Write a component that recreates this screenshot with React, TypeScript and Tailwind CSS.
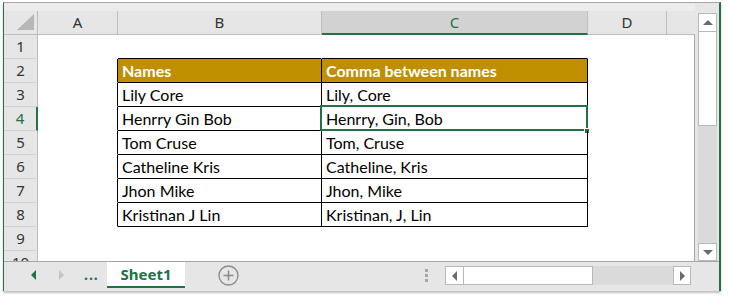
import React from 'react';

const GREEN = '#217346';

type Row = { n: number; b?: string; c?: string; head?: boolean };

const rows: Row[] = [
  { n: 1 },
  { n: 2, b: 'Names', c: 'Comma between names', head: true },
  { n: 3, b: 'Lily Core', c: 'Lily, Core' },
  { n: 4, b: 'Henrry Gin Bob', c: 'Henrry, Gin, Bob' },
  { n: 5, b: 'Tom Cruse', c: 'Tom, Cruse' },
  { n: 6, b: 'Catheline Kris', c: 'Catheline, Kris' },
  { n: 7, b: 'Jhon Mike', c: 'Jhon, Mike' },
  { n: 8, b: 'Kristinan J Lin', c: 'Kristinan, J, Lin' },
  { n: 9 },
  { n: 10 },
];

const uiFont = { fontFamily: '"Noto Sans", "Open Sans", sans-serif' };
const cellFont = { fontFamily: 'Lato, "Open Sans", sans-serif' };

const ColHeader: React.FC<{ label: string; width: string; selected?: boolean }> = ({ label, width, selected }) => (
  <div
    className={`${width} h-[24px] shrink-0 flex items-center justify-center text-[15px] ${
      selected
        ? 'bg-[#d2d2d2] text-[#217346] border-b-2 border-b-[#217346] border-r border-r-[#bdbdbd]'
        : 'text-[#333] border-b border-b-[#bdbdbd] border-r border-r-[#bdbdbd]'
    }`}
  >
    {label}
  </div>
);

const SheetRow: React.FC<{ row: Row }> = ({ row }) => {
  const inTable = row.n >= 2 && row.n <= 8;
  const hasBottom = row.n >= 1 && row.n <= 8;
  const selected = row.n === 4;
  const vLine = inTable ? 'border-r-black' : 'border-r-transparent';
  const hLine = hasBottom ? 'border-b-black' : 'border-b-transparent';
  const fill = row.head ? 'bg-[#bf8f00] text-white font-bold' : 'text-black';

  return (
    <div className="flex h-[24px] shrink-0">
      <div
        style={uiFont}
        className={`w-[34px] h-[24px] shrink-0 flex items-center justify-center text-[15px] bg-[#e6e6e6] border-b border-b-[#d0d0d0] ${
          selected ? 'bg-[#d2d2d2] text-[#217346] border-r-2 border-r-[#217346]' : 'text-[#333] border-r border-r-[#bdbdbd]'
        }`}
      >
        {row.n}
      </div>
      <div className={`w-[80px] h-[24px] shrink-0 border-r border-b border-b-transparent ${vLine}`} />
      <div
        style={cellFont}
        className={`w-[204px] h-[24px] shrink-0 flex items-center pl-[4px] pt-[1px] text-[16px] border-r border-b ${vLine} ${hLine} ${row.b ? fill : ''}`}
      >
        {row.b}
      </div>
      <div
        style={cellFont}
        className={`relative w-[266px] h-[24px] shrink-0 flex items-center pl-[4px] pt-[1px] text-[16px] border-r border-b ${vLine} ${hLine} ${row.c ? fill : ''}`}
      >
        {row.c}
        {selected && (
          <>
            <div className="absolute left-[-2px] top-[-2px] w-[268px] h-[26px] border-2 border-[#217346]" />
            <div className="absolute left-[262px] top-[21px] w-[6px] h-[6px] bg-[#217346] border border-white" />
          </>
        )}
      </div>
    </div>
  );
};

const Tri: React.FC<{ dir: 'up' | 'down' | 'left' | 'right'; color: string }> = ({ dir, color }) => {
  const pts = {
    up: '0,5 5,0 10,5',
    down: '0,0 10,0 5,5',
    left: '5,0 5,10 0,5',
    right: '0,0 0,10 5,5',
  }[dir];
  const w = dir === 'up' || dir === 'down' ? 10 : 5;
  const h = dir === 'up' || dir === 'down' ? 5 : 10;
  return (
    <svg width={w} height={h} viewBox={`0 0 ${w} ${h}`}>
      <polygon points={pts} fill={color} />
    </svg>
  );
};

export default function App() {
  return (
    <div className="w-[730px] h-[300px] bg-white pt-[2px] pl-[3px] overflow-hidden">
      <div className="w-[718px] h-[289px] flex flex-col bg-[#e6e6e6] border-t border-t-[#a6a6a6] border-l border-l-[#217346] border-r-2 border-r-[#217346] shadow-[0_2px_2px_rgba(0,0,0,0.25)]">
        {/* sheet area */}
        <div className="flex h-[258px] shrink-0">
          <div className="w-[691px] shrink-0 flex flex-col">
            <div className="h-[8px] shrink-0 bg-[#ececec]" />
            <div className="flex shrink-0" style={uiFont}>
              <div className="w-[34px] h-[24px] shrink-0 flex items-end justify-end pr-[3px] pb-[4px] border-r border-r-[#bdbdbd] border-b border-b-[#bdbdbd]">
                <svg width="17" height="16" viewBox="0 0 17 16">
                  <polygon points="17,0 17,16 0,16" fill="#b7b7b7" />
                </svg>
              </div>
              <ColHeader label="A" width="w-[80px]" />
              <ColHeader label="B" width="w-[204px]" />
              <ColHeader label="C" width="w-[266px]" selected />
              <ColHeader label="D" width="w-[79px]" />
              <div className="flex-1 h-[24px] border-b border-b-[#bdbdbd]" />
            </div>
            <div className="flex-1 flex flex-col overflow-hidden bg-white border-r border-r-[#a6a6a6]">
              {rows.map(r => (
                <SheetRow key={r.n} row={r} />
              ))}
            </div>
          </div>
          {/* vertical scrollbar */}
          <div className="flex-1 pl-[3px] pt-[10px] flex">
            <div className="w-[19px] flex flex-col bg-[#dadada]">
              <div className="h-[19px] bg-white border border-[#b9b9b9] flex items-center justify-center">
                <Tri dir="up" color="#6b6b6b" />
              </div>
              <div className="h-[94px] bg-white border border-[#b9b9b9] border-t-0" />
              <div className="flex-1" />
              <div className="h-[18px] bg-white border border-[#b9b9b9] flex items-center justify-center">
                <Tri dir="down" color="#6b6b6b" />
              </div>
            </div>
          </div>
        </div>

        {/* sheet tabs */}
        <div className="flex-1 flex items-start border-t border-t-[#a6a6a6]" style={uiFont}>
          <div className="w-[103px] h-[26px] flex items-center shrink-0">
            <div className="w-[27px]" />
            <Tri dir="left" color={GREEN} />
            <div className="w-[23px]" />
            <Tri dir="right" color="#c4c4c4" />
            <div className="w-[20px]" />
            <span className="text-[#217346] font-bold text-[14px] tracking-[1px] leading-none">...</span>
          </div>
          <div className="w-[78px] h-[26px] shrink-0 bg-white border-b-2 border-b-[#217346] flex items-center justify-center text-[#217346] font-bold text-[15px]">
            Sheet1
          </div>
          <div className="w-[86px] h-[26px] flex items-center justify-center shrink-0">
            <svg width="21" height="21" viewBox="0 0 21 21">
              <circle cx="10.5" cy="10.5" r="9.5" fill="none" stroke="#8a8a8a" strokeWidth="1.3" />
              <path d="M10.5 5.5v10M5.5 10.5h10" stroke="#8a8a8a" strokeWidth="1.5" />
            </svg>
          </div>
          <div className="w-[160px] shrink-0 h-[26px] flex justify-end pr-[3px] pt-[7px]">
            <div className="flex flex-col gap-[2px]">
              <div className="w-[3px] h-[3px] bg-[#a6a6a6]" />
              <div className="w-[3px] h-[3px] bg-[#a6a6a6]" />
              <div className="w-[3px] h-[3px] bg-[#a6a6a6]" />
            </div>
          </div>
          <div className="w-[14px] shrink-0" />
          <div className="flex mt-[4px] h-[19px]">
            <div className="w-[19px] bg-white border border-[#b9b9b9] flex items-center justify-center">
              <Tri dir="left" color="#6b6b6b" />
            </div>
            <div className="w-[129px] bg-white border border-[#b9b9b9] border-l-0" />
            <div className="w-[80px] bg-[#dadada]" />
            <div className="w-[18px] bg-white border border-[#b9b9b9] flex items-center justify-center">
              <Tri dir="right" color="#6b6b6b" />
            </div>
          </div>
        </div>
      </div>
    </div>
  );
}
